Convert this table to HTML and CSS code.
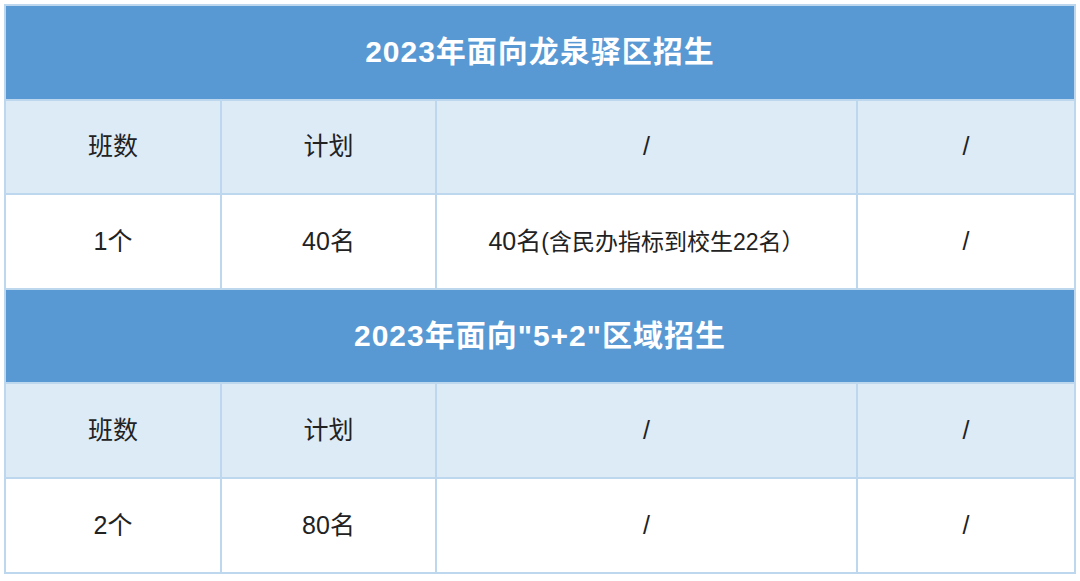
FILE: index.html
```html
<!DOCTYPE html>
<html lang="zh-CN">
<head>
<meta charset="utf-8">
<title>2023年招生计划</title>
<link rel="stylesheet" href="styles.css">
</head>
<body>
<table class="plan">
  <colgroup>
    <col class="c1"><col class="c2"><col class="c3"><col class="c4">
  </colgroup>
  <tbody>
    <tr class="title"><td colspan="4">2023年面向龙泉驿区招生</td></tr>
    <tr class="head"><td>班数</td><td>计划</td><td>/</td><td>/</td></tr>
    <tr class="data"><td>1个</td><td>40名</td><td>40名<span class="note">(含民办指标到校生22名）</span></td><td>/</td></tr>
    <tr class="title"><td colspan="4">2023年面向"5+2"区域招生</td></tr>
    <tr class="head"><td>班数</td><td>计划</td><td>/</td><td>/</td></tr>
    <tr class="data"><td>2个</td><td>80名</td><td>/</td><td>/</td></tr>
  </tbody>
</table>
</body>
</html>
```

FILE: styles.css
```css
html, body {
  margin: 0;
  padding: 0;
  background: #ffffff;
}

body {
  padding: 4px 0 0 4px;
  font-family: "Liberation Sans", "Noto Sans CJK SC", sans-serif;
  color: #222222;
}

.plan {
  border-collapse: collapse;
  table-layout: fixed;
  width: 1070px;
}

.c1 { width: 216px; }
.c2 { width: 215px; }
.c3 { width: 421px; }
.c4 { width: 218px; }

.plan td {
  border: 2px solid #bdd7ee;
  height: 92.6px;
  padding: 0;
  text-align: center;
  vertical-align: middle;
  font-size: 25px;
  line-height: 1;
}

.title td {
  background: #5899d4;
  color: #ffffff;
  font-weight: bold;
  font-size: 30px;
  letter-spacing: 1px;
}

.head td {
  background: #ddebf7;
}

.data td {
  background: #ffffff;
}

.note {
  font-size: 23px;
}
```
